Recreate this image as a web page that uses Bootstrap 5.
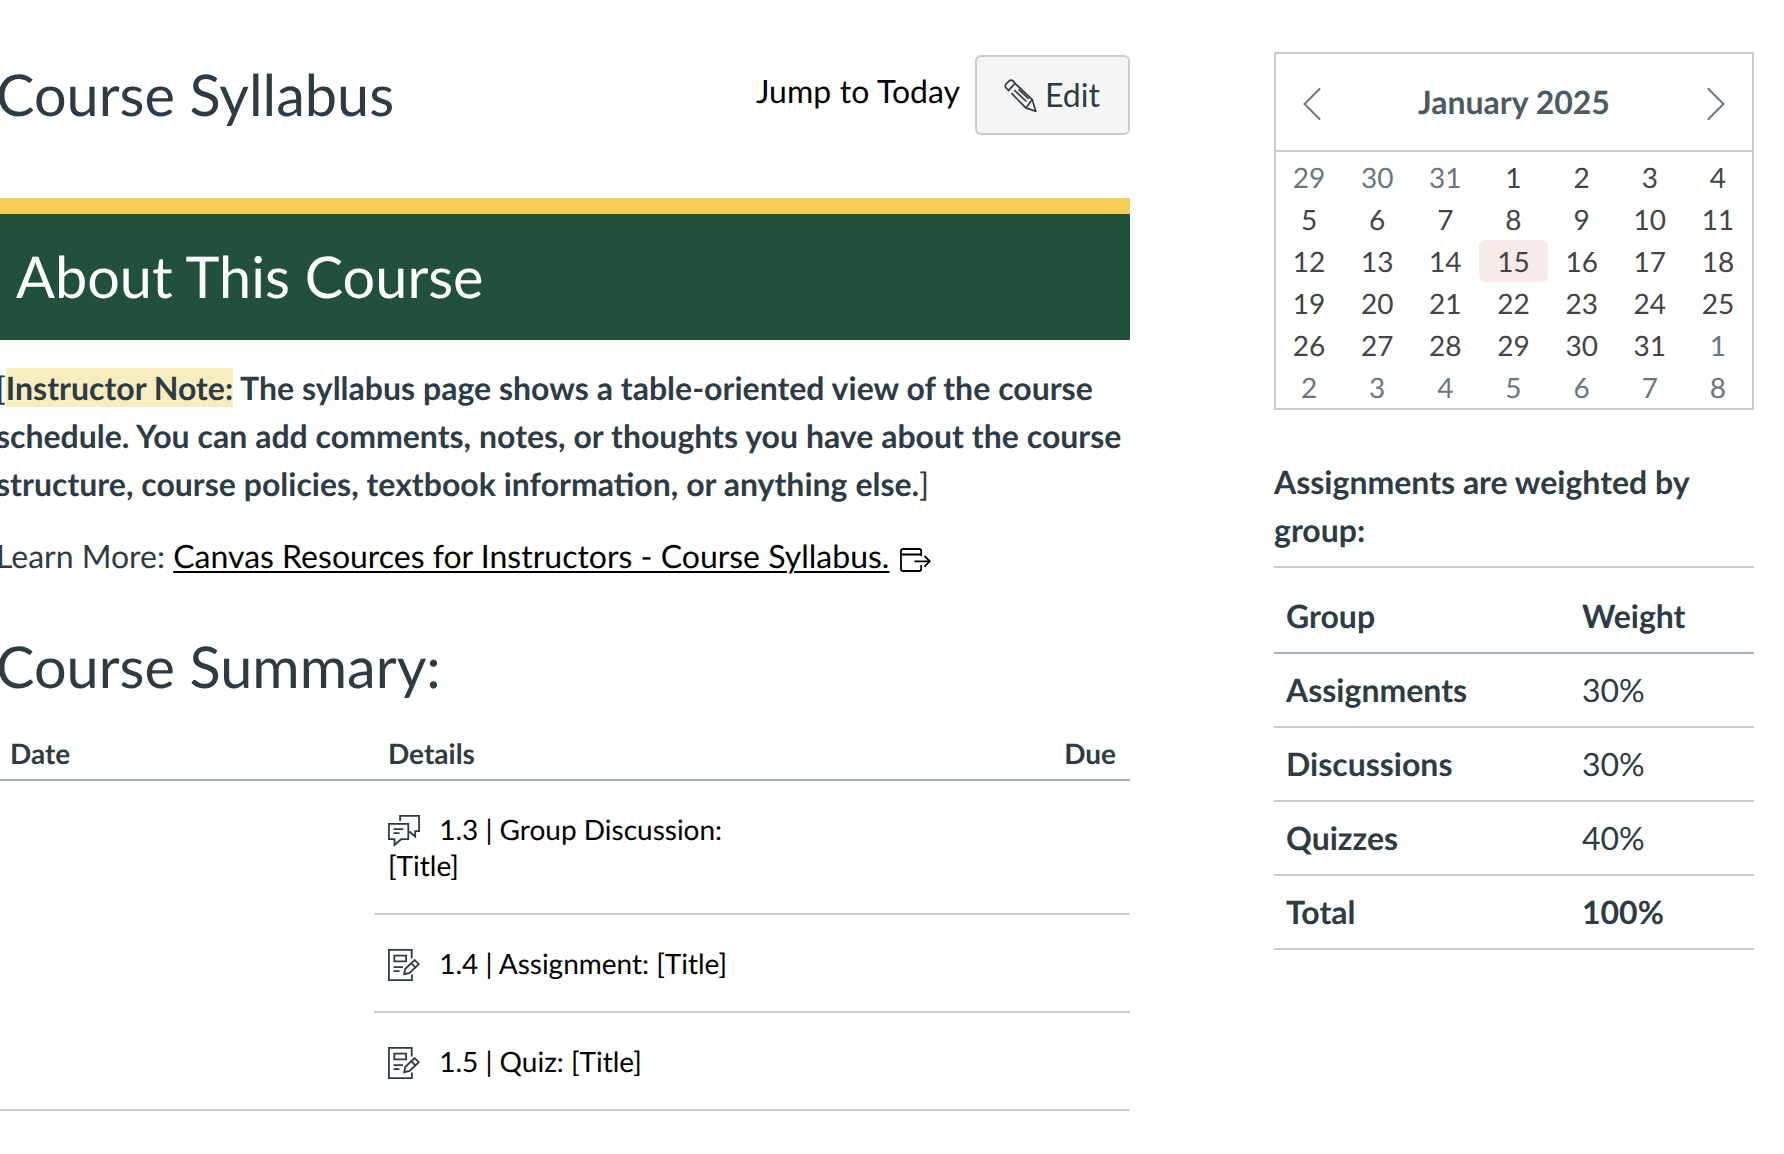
<!DOCTYPE html>
<html lang="en">
<head>
<meta charset="utf-8">
<meta name="viewport" content="width=device-width, initial-scale=1">
<title>Course Syllabus</title>
<link href="https://cdn.jsdelivr.net/npm/bootstrap@5.3.0/dist/css/bootstrap.min.css" rel="stylesheet">
<style>
  body { font-family: Lato, "Liberation Sans", sans-serif; font-size: 32px; line-height: 48px; color: #2d3b45; background: #fff; overflow: hidden; text-rendering: geometricPrecision; }
  .syllabus-main { width: 1134px; margin-left: -4px; padding-top: 50px; }
  .syllabus-side { width: 480px; margin-left: 144px; padding-top: 52px; }
  h1, h2 { font-size: 57.6px; line-height: 86px; font-weight: 400; margin: 0; }
  a { color: #000; }
  .page-head { height: 148px; }
  .page-head h1 { margin-top: 2px; }
  .jump-link { margin: 25px 15px 0 0; word-spacing: .4px; }
  .btn-edit { --bs-btn-padding-x: 0; --bs-btn-padding-y: 0; width: 155px; height: 80px; margin-top: 5px; font-size: 32px; line-height: 38px; color: #2d3b45; background: #f5f5f5; border: 2px solid #c7cdd1; border-radius: 6px; gap: 8px; padding-right: 1px; }
  .about-bar { height: 142px; border-top: 16px solid #f5ce55; background: #22513b; color: #fff; padding: 20px 0 0 20px; margin-bottom: 24px; }
  .note-text { word-spacing: .13px; }
  .note-label { background: #f8edbe; }
  .res-link { text-decoration-thickness: 2px; text-underline-offset: 3px; }
  .ext-icon { vertical-align: -5px; margin-left: 1px; }
  .summary-title { margin-top: 44px; margin-bottom: 17px; }
  .wt-table, .sum-table { --bs-table-color: #2d3b45; --bs-table-bg: transparent; color: #2d3b45; border-color: #c7cdd1; table-layout: fixed; border-collapse: separate; border-spacing: 0; margin: 0; }
  .sum-table { font-size: 28px; line-height: 36px; }
  .sum-table > thead > tr > th { padding: 8px 14px; border-bottom: 2px solid #a5afb5; }
  .sum-table > tbody > tr > td { padding: 30px 14px; border-bottom: 2px solid #c7cdd1; color: #000; }
  .item-icon { color: #2d3b45; vertical-align: -3px; margin: -4px 12px -4px 0; }
  .mini-cal { height: 358px; border: 2px solid #c7cdd1; color: #444; font-size: 28px; line-height: 42px; }
  .cal-head { height: 98px; border-bottom: 2px solid #c7cdd1; padding: 0 27px 0 27px; font-size: 32px; color: #4c5a64; }
  .cal-head svg { color: #6b7780; margin-top: 3px; }
  .cal-days { margin: 4px 0 0 -1px; display: grid; grid-template-columns: repeat(7, 1fr); text-align: center; }
  .other-month { color: #6b7780; }
  .is-today { background: #f7ebea; border-radius: 6px; }
  .wt-title { margin: 48px 0 0; padding-bottom: 12px; border-bottom: 2px solid #c7cdd1; }
  .wt-table { margin-top: 12px; line-height: 48px; }
  .wt-table > :not(caption) > * > * { padding: 12px; border-bottom: 2px solid #c7cdd1; }
  .wt-table > thead > tr > th { border-bottom-color: #a5afb5; }
  .wt-table col:first-child { width: 296px; }
</style>
<script src="https://cdn.jsdelivr.net/npm/bootstrap@5.3.0/dist/js/bootstrap.bundle.min.js"></script>
</head>
<body>
<svg class="d-none">
  <symbol id="icon-assignment" viewBox="0 0 32 32">
    <g fill="none" stroke="currentColor" stroke-width="1.8">
      <path d="M23.7 9.5V.9H.9v30.200h23V25.500"/>
      <path d="M6.300 6.700h11.800v5.600H6.300zM5.500 18.200h9.500M5.500 22.200h6"/>
      <path d="M16.200 25.200l1-5.200 9.400-9 4.200 4.200-9.200 8.800zM23.200 14.200l4.200 4.200" stroke-width="1.800"/>
    </g>
  </symbol>
</svg>
<div class="d-flex align-items-start">
  <main class="syllabus-main flex-shrink-0">
    <header class="page-head d-flex align-items-start">
      <h1 class="me-auto">Course Syllabus</h1>
      <a href="#" class="jump-link text-decoration-none lh-1">Jump to Today</a>
      <button type="button" class="btn btn-edit d-flex align-items-center justify-content-center">
        <svg width="33" height="33" viewBox="0 0 33 33" fill="none" stroke="currentColor" stroke-width="1.700">
          <path d="M9.300 2.200Q7.200.3 5.200 1.800L1.900 5.200Q.5 7.100 2.200 9L4.600 11.400 11 4.300zM11 4.300L28.300 20.600 31.800 32.300 21.900 28.900 7.400 14.200M28.300 20.600L21.900 28.900M10.300 11.200L22.500 22.500M14.500 10.300L24.800 20"/>
        </svg>
        <span>Edit</span>
      </button>
    </header>
    <section>
      <h2 class="about-bar">About This Course</h2>
      <p class="note-text mb-4">[<strong><span class="note-label">Instructor Note:</span> The syllabus page shows a table-oriented view of the course schedule. You can add comments, notes, or thoughts you have about the course structure, course policies, textbook information, or anything else.</strong>]</p>
      <p class="mb-0">Learn More: <a href="#" class="res-link">Canvas Resources for Instructors - Course Syllabus.</a>
        <svg class="ext-icon" width="32" height="26" viewBox="0 0 32 26" fill="none" stroke="#000" stroke-width="1.800">
          <path d="M22.200 9V4Q22.200 2 20.200 2H4Q2 2 2 4v18q0 2 2 2h16.200q2 0 2-2v-4M2 7.500h20.200M15.500 14.300h15M25.500 9l5.300 5.300-5.300 5.300"/>
        </svg>
      </p>
    </section>
    <section>
      <h2 class="summary-title">Course Summary:</h2>
      <table class="table sum-table">
        <thead><tr><th>Date</th><th>Details</th><th class="text-end">Due</th></tr></thead>
        <tbody>
          <tr>
            <td rowspan="3"></td>
            <td><svg class="item-icon" width="32" height="32" viewBox="0 0 32 32" fill="none" stroke="currentColor" stroke-width="1.800"><path d="M.9 8.900h19.400v15.300h-7.100L6.500 30v-5.800H.9zM5.500 14.200h9.800M5.500 18.200h6M12.100 6V.9h19v15.300h-3.900V21.500L21.200 16.500"/></svg> <a href="#" class="text-decoration-none">1.3 | Group Discussion: [Title]</a></td>
            <td></td>
          </tr>
          <tr>
            <td><svg class="item-icon" width="32" height="32"><use href="#icon-assignment"/></svg> <a href="#" class="text-decoration-none">1.4 | Assignment: [Title]</a></td>
            <td></td>
          </tr>
          <tr>
            <td><svg class="item-icon" width="32" height="32"><use href="#icon-assignment"/></svg> <a href="#" class="text-decoration-none">1.5 | Quiz: [Title]</a></td>
            <td></td>
          </tr>
        </tbody>
      </table>
    </section>
  </main>
  <aside class="syllabus-side flex-shrink-0">
    <div class="mini-cal">
      <div class="cal-head d-flex align-items-center justify-content-between">
        <svg width="18" height="32" viewBox="0 0 18 32" fill="none" stroke="currentColor" stroke-width="2" stroke-linecap="round"><path d="M16.500 1L1.500 16l15 15"/></svg>
        <strong>January 2025</strong>
        <svg width="18" height="32" viewBox="0 0 18 32" fill="none" stroke="currentColor" stroke-width="2" stroke-linecap="round"><path d="M1.500 1l15 15-15 15"/></svg>
      </div>
      <div class="cal-days">
        <span class="other-month">29</span><span class="other-month">30</span><span class="other-month">31</span><span>1</span><span>2</span><span>3</span><span>4</span>
        <span>5</span><span>6</span><span>7</span><span>8</span><span>9</span><span>10</span><span>11</span>
        <span>12</span><span>13</span><span>14</span><span class="is-today">15</span><span>16</span><span>17</span><span>18</span>
        <span>19</span><span>20</span><span>21</span><span>22</span><span>23</span><span>24</span><span>25</span>
        <span>26</span><span>27</span><span>28</span><span>29</span><span>30</span><span>31</span><span class="other-month">1</span>
        <span class="other-month">2</span><span class="other-month">3</span><span class="other-month">4</span><span class="other-month">5</span><span class="other-month">6</span><span class="other-month">7</span><span class="other-month">8</span>
      </div>
    </div>
    <p class="wt-title fw-bold">Assignments are weighted by group:</p>
    <table class="table wt-table">
      <colgroup><col><col></colgroup>
      <thead><tr><th>Group</th><th>Weight</th></tr></thead>
      <tbody>
        <tr><th>Assignments</th><td>30%</td></tr>
        <tr><th>Discussions</th><td>30%</td></tr>
        <tr><th>Quizzes</th><td>40%</td></tr>
        <tr><th>Total</th><td class="fw-bold">100%</td></tr>
      </tbody>
    </table>
  </aside>
</div>
</body>
</html>
